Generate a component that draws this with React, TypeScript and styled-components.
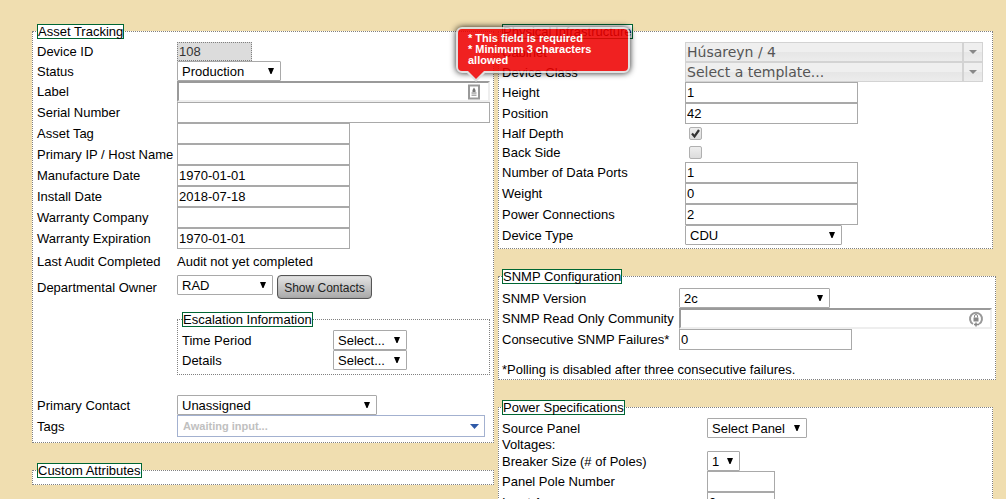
import React from "react";
import styled, { createGlobalStyle } from "styled-components";

const GlobalStyle = createGlobalStyle`
  *, *::before, *::after { box-sizing: border-box; }
  html { scrollbar-width: none; }
  body {
    margin: 0;
    background: #f0deb0;
    color: #000;
    font: 13px/15px "Liberation Sans", Arial, sans-serif;
  }
  input, select, button { font: inherit; color: inherit; margin: 0; }
`;

const Page = styled.main`
  display: flex;
  align-items: flex-start;
  gap: 4px;
  padding: 24px 10px 0 32px;
`;

const Column = styled.div<{ $grow: number }>`
  flex: ${(p) => p.$grow} 1 0;
  min-width: 0;
`;

const Panel = styled.fieldset<{ $top?: number; $bottom?: number; $left?: number; $inset?: number }>`
  min-width: 0;
  margin: 0 ${(p) => p.$inset ?? 0}px 20px 0;
  padding: ${(p) => p.$top ?? 3}px 3px ${(p) => p.$bottom ?? 0}px ${(p) => p.$left ?? 4}px;
  border: 1px dotted #808080;
  background: #fff;
`;

const SubPanel = styled(Panel)`
  width: 313px;
  margin: 0;
`;

const Legend = styled.legend`
  padding: 0;
  border: 1px solid #063;
  background: #fff;
  height: 15px;
  line-height: 13px;
`;

const Rows = styled.div<{ $label: number }>`
  --label-width: ${(p) => p.$label}px;
`;

const Row = styled.div<{ $height?: number }>`
  display: grid;
  grid-template-columns: var(--label-width) minmax(0, 1fr);
  align-items: center;
  min-height: ${(p) => p.$height ?? 21}px;
  white-space: nowrap;
`;

const TightRow = styled(Row)`
  line-height: 13px;
`;

const Field = styled.div<{ $top?: boolean }>`
  display: flex;
  align-items: ${(p) => (p.$top ? "flex-start" : "center")};
  gap: 4px;
  position: relative;
`;

const TextBox = styled.input<{ $width?: number }>`
  width: ${(p) => p.$width ?? 173}px;
  height: 21px;
  padding: 0 1px;
  border: 1px solid #a9a9a9;
  background: #fff;
`;

const InsetBox = styled(TextBox)`
  border: 2px solid;
  border-color: #9a9a9a #eee #eee #9a9a9a;
`;

const ReadOnlyBox = styled(TextBox)`
  height: 19px;
  border: 1px dotted #808080;
  background: #dcdcdc;
  color: #333;
`;

const Overlap = styled.span`
  display: inline-grid;
  align-items: center;
  & > * { grid-area: 1 / 1; }
  & > svg { pointer-events: none; justify-self: end; }
`;

const SelectBox = styled.select<{ $width: number }>`
  appearance: none;
  width: ${(p) => p.$width}px;
  height: 20px;
  padding: 0 4px;
  border: 1px solid #a9a9a9;
  border-radius: 1px;
  background: #fff;
`;

const Arrow = styled.svg`
  width: 6px;
  height: 6px;
  margin-right: 7px;
`;

const FieldIcon = styled.svg`
  width: 16px;
  height: 16px;
  margin-right: 8px;
`;

const CheckBox = styled.input`
  appearance: none;
  width: 13px;
  height: 13px;
  margin-left: 4px;
  border: 1px solid #b0b0b0;
  border-radius: 2px;
  background: linear-gradient(#eee, #dcdcdc);
`;

const ContactsButton = styled.button`
  height: 24px;
  width: 95px;
  padding: 3px 0 0;
  border: 1px solid #555;
  border-radius: 4px;
  background: linear-gradient(#e4e4e4, #a9a9a9);
  box-shadow: inset 0 0 1px #777;
  color: #222;
  font-size: 12px;
`;

const Combo = styled.div`
  display: flex;
  width: 298px;
  height: 20px;
  border: 1px solid #d3d3d3;
  background: linear-gradient(#efefef 50%, #e6e6e6 50%, #ececec);
  color: #555;
`;

const ComboInput = styled.input`
  flex: 1;
  min-width: 0;
  padding: 0 0 0 1px;
  border: 0;
  background: none;
  font: 14px "DejaVu Sans", Verdana, sans-serif;
`;

const ComboButton = styled.button`
  display: grid;
  place-items: center;
  width: 20px;
  padding: 0;
  border: 0;
  border-left: 2px solid #d3d3d3;
  background: none;
`;

const TagBox = styled.div`
  display: flex;
  align-items: center;
  width: 308px;
  height: 22px;
  padding: 0 5px;
  border: 1px solid #a3b1d0;
  background: #fff;
`;

const TagInput = styled.input`
  flex: 1;
  min-width: 0;
  padding: 0;
  border: 0;
  background: none;
  font-size: 11px;
  font-weight: bold;
  &::placeholder { color: #c0c0c0; opacity: 1; }
`;

const TagButton = styled.button`
  display: grid;
  padding: 0;
  border: 0;
  background: none;
`;

const Tip = styled.div`
  position: absolute;
  left: 279px;
  bottom: calc(100% + 8px);
  z-index: 1;
  width: 174px;
  padding: 4px 10px 5px;
  border: 2px solid #ddd;
  border-radius: 6px;
  background: #ee0101;
  box-shadow: 0 0 6px #000;
  opacity: 0.87;
  color: #fff;
  font-size: 11px;
  font-weight: bold;
  line-height: 11px;
  white-space: normal;
`;

const TipTail = styled.svg`
  position: absolute;
  left: 8px;
  top: 100%;
  width: 20px;
  height: 11px;
`;

const Gap = styled.div<{ $size: number }>`
  height: ${(p) => p.$size}px;
`;

const Select = ({ id, width, value }: { id: string; width: number; value: string }) => (
  <Overlap>
    <SelectBox id={id} $width={width} defaultValue={value}>
      <option>{value}</option>
    </SelectBox>
    <Arrow viewBox="0 0 6 6" aria-hidden="true">
      <path d="M0 0h6L3.500 6h-1z" fill="#000" />
    </Arrow>
  </Overlap>
);

type EntryProps = { id: string; label: string; height?: number; top?: boolean; children: React.ReactNode };
const Entry = ({ id, label, height, top, children }: EntryProps) => (
  <Row $height={height}>
    <label htmlFor={id}>{label}</label>
    <Field $top={top}>{children}</Field>
  </Row>
);

type TextEntryProps = { id: string; label: string; value?: string; width?: number };
const TextEntry = ({ id, label, value = "", width }: TextEntryProps) => (
  <Entry id={id} label={label}>
    <TextBox id={id} type="text" defaultValue={value} $width={width} />
  </Entry>
);

const SelectEntry = ({ id, label, value, width }: { id: string; label: string; value: string; width: number }) => (
  <Entry id={id} label={label} height={20}>
    <Select id={id} width={width} value={value} />
  </Entry>
);

const ComboEntry = ({ id, label, value }: { id: string; label: string; value: string }) => (
  <Entry id={id} label={label} height={20}>
    <Combo>
      <ComboInput id={id} defaultValue={value} />
      <ComboButton type="button" aria-label={`Open ${label}`}>
        <svg width="8" height="4" viewBox="0 0 8 4"><path d="M0 0h8L4 4z" fill="#888" /></svg>
      </ComboButton>
    </Combo>
  </Entry>
);

const CheckEntry = ({ id, label, checked }: { id: string; label: string; checked?: boolean }) => (
  <Entry id={id} label={label} height={19}>
    <Overlap>
      <CheckBox id={id} type="checkbox" defaultChecked={checked} />
      {checked && (
        <svg width="13" height="13" viewBox="0 0 13 13">
          <path d="M3 6.5l2.5 3L10 3" fill="none" stroke="#333" strokeWidth="2.2" />
        </svg>
      )}
    </Overlap>
  </Entry>
);

const LabelTip = () => (
  <Tip role="alert">
    * This field is required
    <br />* Minimum 3 characters allowed
    <TipTail viewBox="0 0 20 11">
      <path d="M0 1L10 11L20 1z" fill="#ddd" />
      <path d="M2 0L10 8L18 0z" fill="#ee0101" />
    </TipTail>
  </Tip>
);

const AssetTracking = () => (
  <Panel $bottom={5}>
    <Legend>Asset Tracking</Legend>
    <Rows $label={140}>
      <Entry id="device-id" label="Device ID" height={19}>
        <ReadOnlyBox id="device-id" readOnly value="108" $width={75} />
      </Entry>
      <SelectEntry id="status" label="Status" value="Production" width={104} />
      <Entry id="label" label="Label">
        <Overlap>
          <InsetBox id="label" type="text" $width={313} />
          <FieldIcon viewBox="0 0 16 16" aria-hidden="true">
            <path d="M3 1.500h10v13H3z" fill="#fff" stroke="#999" strokeWidth="2" />
            <path d="M8 3.500l1.500 2.500V8h-3V6zM5.500 8.500h5v1h-5z" fill="#777" />
            <path d="M5.500 10.500h5v1.500h-5z" fill="#aaa" />
          </FieldIcon>
        </Overlap>
        <LabelTip />
      </Entry>
      <TextEntry id="serial" label="Serial Number" width={313} />
      <TextEntry id="asset-tag" label="Asset Tag" />
      <TextEntry id="host" label="Primary IP / Host Name" />
      <TextEntry id="made" label="Manufacture Date" value="1970-01-01" />
      <TextEntry id="installed" label="Install Date" value="2018-07-18" />
      <TextEntry id="company" label="Warranty Company" />
      <TextEntry id="expiry" label="Warranty Expiration" value="1970-01-01" />
      <Row $height={25}>
        <span>Last Audit Completed</span>
        <span>Audit not yet completed</span>
      </Row>
      <Entry id="owner" label="Departmental Owner" height={26} top>
        <Select id="owner" width={96} value="RAD" />
        <ContactsButton type="button">Show Contacts</ContactsButton>
      </Entry>
      <Gap $size={12} />
      <Row>
        <span />
        <SubPanel $bottom={4}>
          <Legend>Escalation Information</Legend>
          <Rows $label={151}>
            <SelectEntry id="period" label="Time Period" value="Select..." width={74} />
            <SelectEntry id="details" label="Details" value="Select..." width={74} />
          </Rows>
        </SubPanel>
      </Row>
      <Gap $size={20} />
      <SelectEntry id="contact" label="Primary Contact" value="Unassigned" width={200} />
      <Entry id="tags" label="Tags" height={22}>
        <TagBox>
          <TagInput id="tags" placeholder="Awaiting input..." />
          <TagButton type="button" aria-label="Show tags">
            <svg width="9" height="5" viewBox="0 0 9 5"><path d="M0 0h9L4.500 5z" fill="#2f5aa8" /></svg>
          </TagButton>
        </TagBox>
      </Entry>
    </Rows>
  </Panel>
);

const Infrastructure = () => (
  <Panel $inset={3} $bottom={3} $left={3}>
    <Legend>Physical Infrastructure</Legend>
    <Rows $label={183}>
      <ComboEntry id="cabinet" label="Cabinet" value="Húsareyn / 4" />
      <ComboEntry id="template" label="Device Class" value="Select a template..." />
      <TextEntry id="height" label="Height" value="1" />
      <TextEntry id="position" label="Position" value="42" />
      <CheckEntry id="half" label="Half Depth" checked />
      <CheckEntry id="back" label="Back Side" />
      <TextEntry id="ports" label="Number of Data Ports" value="1" />
      <TextEntry id="weight" label="Weight" value="0" />
      <TextEntry id="connections" label="Power Connections" value="2" />
      <SelectEntry id="type" label="Device Type" value="CDU" width={157} />
    </Rows>
  </Panel>
);

const Snmp = () => (
  <Panel $top={4} $bottom={2} $left={3}>
    <Legend>SNMP Configuration</Legend>
    <Rows $label={177}>
      <SelectEntry id="version" label="SNMP Version" value="2c" width={151} />
      <Entry id="community" label="SNMP Read Only Community">
        <Overlap>
          <InsetBox id="community" type="text" $width={313} />
          <FieldIcon viewBox="0 0 16 16" aria-hidden="true">
            <path d="M5 13A6 6 0 1 1 11 13" fill="none" stroke="#999" strokeWidth="2" />
            <path d="M5.500 6.500h5v4h-5z" fill="#888" />
            <path d="M6.500 6.500V5a1.500 1.500 0 0 1 3 0v1.500" fill="none" stroke="#888" />
            <path d="M8 11.500v4M6 13.500h5" stroke="#888" strokeWidth="1.500" />
          </FieldIcon>
        </Overlap>
      </Entry>
      <TextEntry id="failures" label="Consecutive SNMP Failures*" value="0" />
      <Gap $size={12} />
      <div>*Polling is disabled after three consecutive failures.</div>
    </Rows>
  </Panel>
);

const PowerSpecs = () => (
  <Panel $inset={3} $left={3}>
    <Legend>Power Specifications</Legend>
    <Rows $label={205}>
      <SelectEntry id="panel" label="Source Panel" value="Select Panel" width={100} />
      <TightRow $height={13}><span>Voltages:</span></TightRow>
      <SelectEntry id="poles" label="Breaker Size (# of Poles)" value="1" width={33} />
      <TextEntry id="pole-number" label="Panel Pole Number" width={68} />
      <TextEntry id="amperage" label="Input Amperage" value="0" width={68} />
    </Rows>
  </Panel>
);

export default function App() {
  return (
    <>
      <GlobalStyle />
      <Page>
        <Column $grow={462}>
          <AssetTracking />
          <Panel $bottom={3}>
            <Legend>Custom Attributes</Legend>
          </Panel>
        </Column>
        <Column $grow={498}>
          <Infrastructure />
          <Snmp />
          <PowerSpecs />
        </Column>
      </Page>
    </>
  );
}
